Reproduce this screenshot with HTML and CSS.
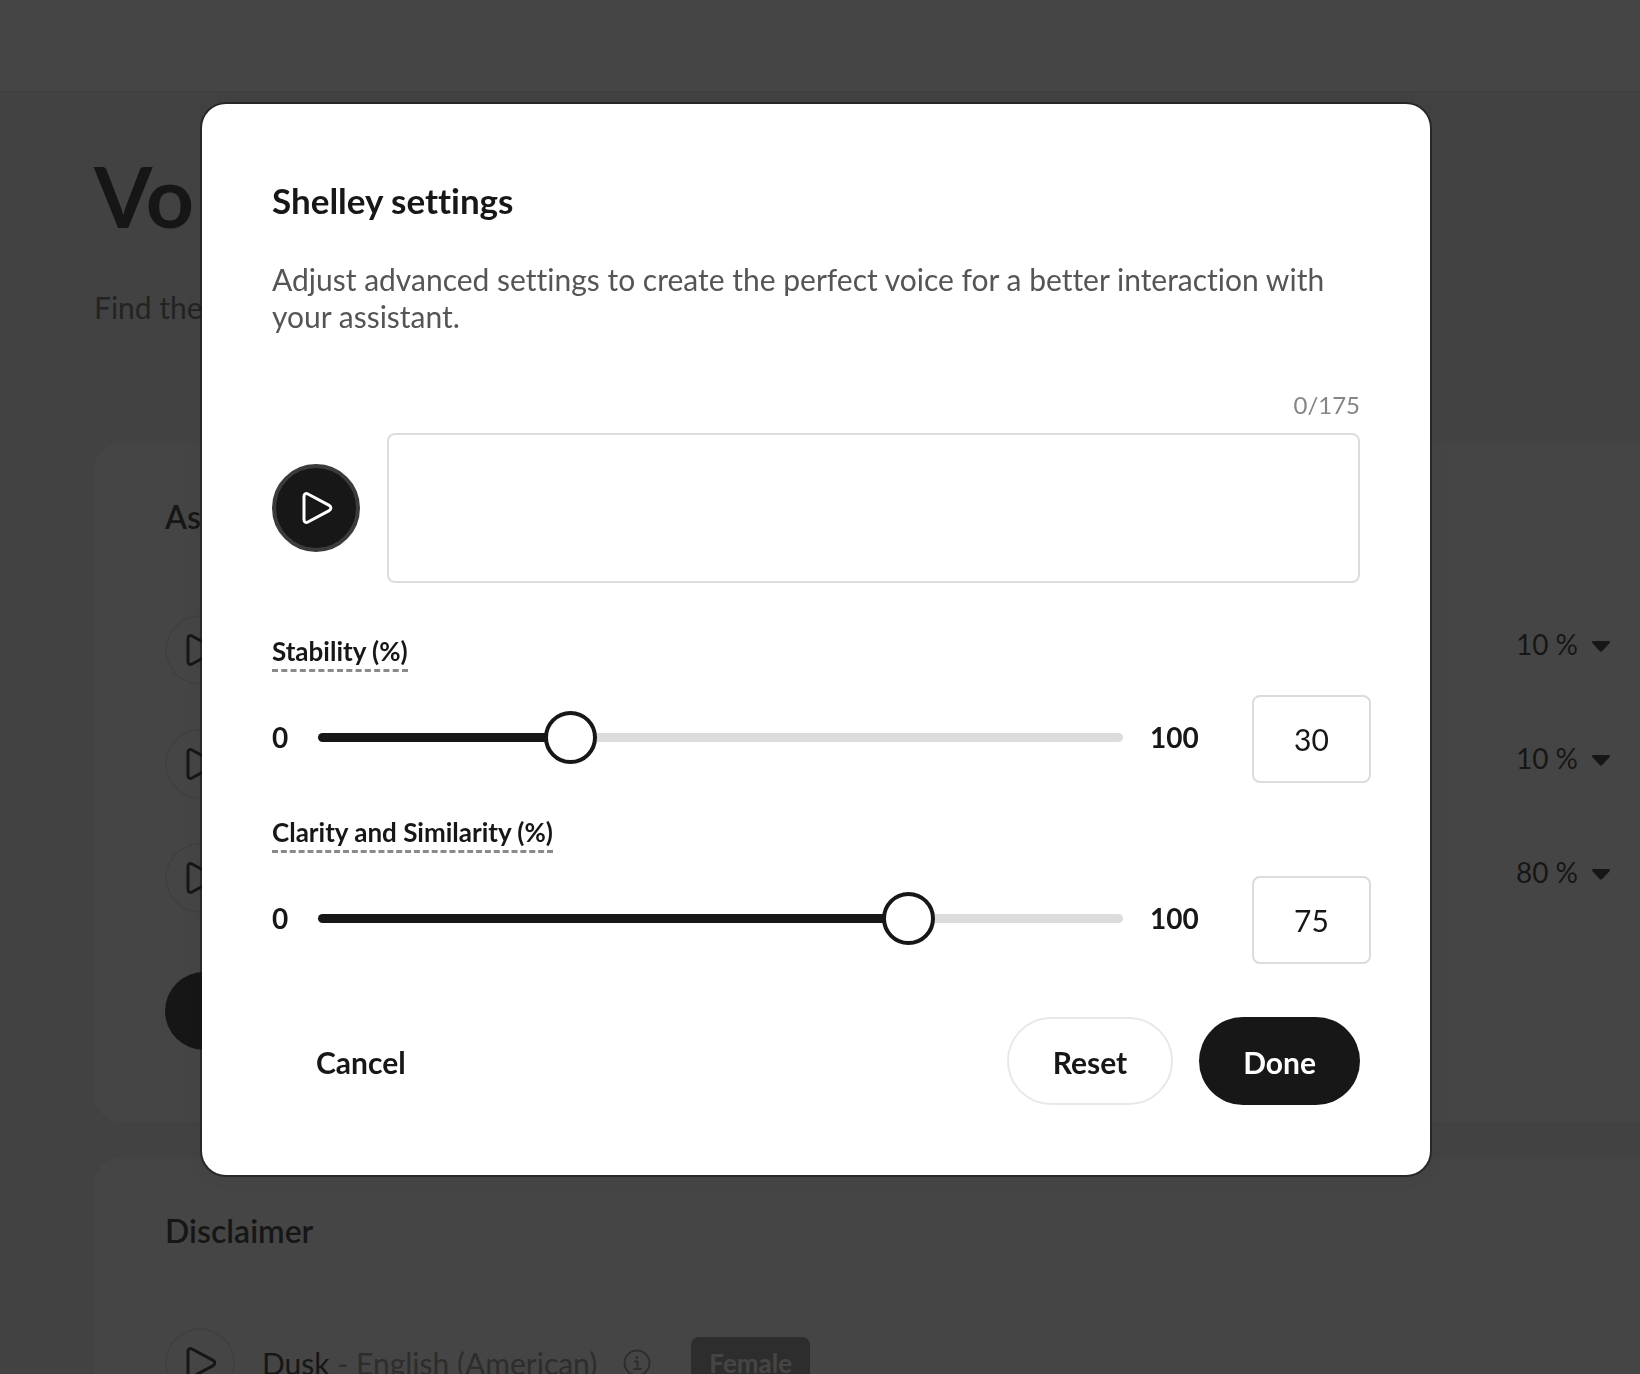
FILE: index.html
```html
<!DOCTYPE html>
<html lang="en">
<head>
<meta charset="utf-8">
<meta name="viewport" content="width=device-width, initial-scale=1">
<title>Shelley settings</title>
<link rel="stylesheet" href="styles.css">
</head>
<body>
<svg class="sprite" aria-hidden="true">
  <symbol id="play" viewBox="0 0 32 34"><path d="M3 5.2v23.6c0 2.3 2 3.2 3.9 2.2l21.3-11.4c2.2-1.2 2.2-4 0-5.2L6.900 3C5 2 3 2.900 3 5.200z" fill="none" stroke="currentColor" stroke-width="3" stroke-linejoin="round"/></symbol>
  <symbol id="caret" viewBox="0 0 18 11"><path d="M1.500 0h15c1.300 0 1.900 1.300 1 2.200l-7.200 7.700c-.8.900-1.900.9-2.700 0L.5 2.200C-.4 1.300.2 0 1.500 0z" fill="currentColor"/></symbol>
</svg>

<div class="page">
  <header class="topbar"></header>
  <main class="content">
    <h1 class="page-title">Vo</h1>
    <p class="page-lead">Find the</p>

    <section class="card">
      <h2 class="card-title">As</h2>
      <ul class="voices">
        <li class="voice">
          <button class="round" aria-label="Play"><svg class="round-icon"><use href="#play"/></svg></button>
          <button class="share">10 % <svg class="caret"><use href="#caret"/></svg></button>
        </li>
        <li class="voice">
          <button class="round" aria-label="Play"><svg class="round-icon"><use href="#play"/></svg></button>
          <button class="share">10 % <svg class="caret"><use href="#caret"/></svg></button>
        </li>
        <li class="voice">
          <button class="round" aria-label="Play"><svg class="round-icon"><use href="#play"/></svg></button>
          <button class="share">80 % <svg class="caret"><use href="#caret"/></svg></button>
        </li>
      </ul>
      <button class="add" aria-label="Add voice"></button>
    </section>

    <section class="card">
      <h2 class="card-title">Disclaimer</h2>
      <div class="voice voice-named">
        <button class="round" aria-label="Play Dusk"><svg class="round-icon"><use href="#play"/></svg></button>
        <p class="voice-name">Dusk <span class="voice-lang">- English (American)</span></p>
        <svg class="info" viewBox="0 0 28 28" fill="none" stroke="currentColor" stroke-width="2"><circle cx="14" cy="14" r="12.500"/><path d="M11 12.500h3.500V20M10.500 20h8"/><circle cx="14" cy="8.500" r="1.500" fill="currentColor" stroke="none"/></svg>
        <span class="badge">Female</span>
      </div>
    </section>
  </main>
</div>

<div class="backdrop">
  <form class="modal" role="dialog" aria-modal="true" aria-labelledby="dialog-title">
    <h2 class="modal-title" id="dialog-title">Shelley settings</h2>
    <p class="modal-text">Adjust advanced settings to create the perfect voice for a better interaction with your assistant.</p>

    <div class="counter">0/175</div>
    <div class="sample">
      <button type="button" class="preview" aria-label="Play sample"><svg class="preview-icon"><use href="#play"/></svg></button>
      <textarea class="sample-text" maxlength="175" aria-label="Sample text"></textarea>
    </div>

    <div class="fields">
      <div class="field">
        <label class="field-label" for="stability">Stability (%)</label>
        <div class="field-row">
          <span class="limit">0</span>
          <input class="slider" id="stability" type="range" min="0" max="100" value="30" style="--fill: 30%">
          <span class="limit limit-max">100</span>
          <input class="amount" type="text" inputmode="numeric" value="30" aria-label="Stability value">
        </div>
      </div>
      <div class="field">
        <label class="field-label" for="clarity">Clarity and Similarity (%)</label>
        <div class="field-row">
          <span class="limit">0</span>
          <input class="slider" id="clarity" type="range" min="0" max="100" value="75" style="--fill: 75%">
          <span class="limit limit-max">100</span>
          <input class="amount" type="text" inputmode="numeric" value="75" aria-label="Clarity and Similarity value">
        </div>
      </div>
    </div>

    <div class="actions">
      <button type="button" class="btn btn-plain">Cancel</button>
      <button type="button" class="btn btn-outline">Reset</button>
      <button type="button" class="btn btn-solid">Done</button>
    </div>
  </form>
</div>
</body>
</html>
```
FILE: styles.css
```css
:root {
  --ink: #171717;
  --muted: #555557;
  --line: #dcdcdc;
}

* { box-sizing: border-box; }

body {
  margin: 0;
  height: 100vh;
  overflow: hidden;
  background: #f1f1f1;
  color: var(--ink);
  font-family: Lato, "Open Sans", sans-serif;
  font-size: 30px;
  line-height: 36px;
  font-variant-ligatures: none;
}

h1, h2, p, ul { margin: 0; padding: 0; }

button, input, textarea {
  margin: 0;
  padding: 0;
  border: 0;
  background: none;
  color: inherit;
  font: inherit;
}

.sprite { position: absolute; width: 0; height: 0; }

/* Page behind the dialog */
.page { height: 100vh; overflow: hidden; }

.topbar {
  height: 93px;
  background: #fff;
  border-bottom: 2px solid #e6e6e6;
}

.content { padding: 48px 0 0 94px; }

.page-title {
  font-size: 84px;
  line-height: 110px;
  font-weight: 700;
}

.page-lead { margin-top: 38px; color: var(--muted); }

.card {
  margin-top: 35px;
  padding: 54px 30px 72px 71px;
  border-radius: 28px 0 0 28px;
  background: #fff;
}

.page-lead + .card { margin-top: 118px; }

.card-title {
  font-size: 32px;
  line-height: 40px;
  font-weight: 600;
}

.voices {
  display: flex;
  flex-direction: column;
  gap: 44px;
  margin-top: 78px;
  list-style: none;
}

.voice {
  display: flex;
  align-items: center;
  justify-content: space-between;
}

.voice-named {
  justify-content: flex-start;
  margin-top: 77px;
}

.round {
  display: flex;
  align-items: center;
  justify-content: center;
  width: 70px;
  height: 70px;
  padding-left: 2px;
  border: 2px solid #e6e6e6;
  border-radius: 50%;
}

.round-icon { width: 32px; height: 34px; }

.share {
  display: flex;
  align-items: center;
  gap: 14px;
  padding-bottom: 12px;
  font-size: 28px;
}

.caret { width: 18px; height: 11px; margin-top: 4px; }

.add {
  display: block;
  width: 200px;
  height: 78px;
  margin-top: 59px;
  border-radius: 40px;
  background: var(--ink);
}

.voice-name { margin-left: 27px; }
.voice-lang { color: #858588; }
.info { width: 28px; height: 28px; margin-left: 26px; color: #858588; }

.badge {
  margin-left: 40px;
  padding: 8px 18px;
  border-radius: 8px;
  background: #858588;
  color: #fff;
  font-size: 26px;
  font-weight: 700;
}

/* Dialog */
.backdrop {
  position: fixed;
  inset: 0;
  display: flex;
  align-items: flex-start;
  justify-content: center;
  padding: 104px 8px 0 0;
  background: rgba(23, 23, 23, .8);
}

.modal {
  width: 90%;
  max-width: 1228px;
  padding: 76px 70px 70px;
  border-radius: 24px;
  background: #fff;
  box-shadow: 0 0 0 2px rgba(23, 23, 23, .6), 0 2px 16px rgba(0, 0, 0, .08);
}

.modal-title {
  font-size: 35px;
  line-height: 40px;
  font-weight: 700;
}

.modal-text {
  margin-top: 41px;
  color: var(--muted);
  line-height: 37px;
}

.counter {
  margin-top: 54px;
  color: #858588;
  font-size: 24px;
  line-height: 32px;
  text-align: right;
}

.sample {
  display: flex;
  align-items: center;
  gap: 27px;
  margin-top: 12px;
}

.preview {
  display: flex;
  flex: none;
  align-items: center;
  justify-content: center;
  width: 88px;
  height: 88px;
  padding-left: 2px;
  border: 4px solid #3b3b3d;
  border-radius: 50%;
  background: var(--ink);
  color: #fff;
}

.preview-icon { width: 32px; height: 34px; }

.sample-text {
  flex: 1;
  height: 150px;
  padding: 20px;
  border: 2px solid var(--line);
  border-radius: 8px;
  resize: none;
}

.fields {
  display: flex;
  flex-direction: column;
  gap: 33px;
  margin-top: 52px;
}

.field-label {
  display: table;
  padding-bottom: 2px;
  border-bottom: 3px dashed #8a8a8c;
  font-size: 26px;
  line-height: 32px;
  font-weight: 700;
}

.field-row {
  display: grid;
  grid-template-columns: 46px 1fr 129px 119px;
  align-items: center;
  margin: 23px -11px 0 0;
}

.limit { padding-bottom: 4px; font-size: 28px; font-weight: 700; }
.limit-max { padding-left: 27px; }

.slider {
  width: 100%;
  height: 53px;
  margin-bottom: 3px;
  appearance: none;
}

.slider::-webkit-slider-runnable-track {
  height: 9px;
  border-radius: 5px;
  background: linear-gradient(to right, var(--ink) var(--fill), var(--line) var(--fill));
}

.slider::-webkit-slider-thumb {
  width: 53px;
  height: 53px;
  margin-top: -22px;
  appearance: none;
  border: 4px solid var(--ink);
  border-radius: 50%;
  background: #fff;
}

.amount {
  width: 100%;
  height: 88px;
  border: 2px solid var(--line);
  border-radius: 8px;
  text-align: center;
}

.actions {
  display: flex;
  gap: 26px;
  margin-top: 53px;
}

.btn {
  height: 88px;
  padding: 2px 44px 0;
  border-radius: 44px;
  font-weight: 700;
}

.btn-plain { margin-right: auto; }
.btn-outline { border: 2px solid #e8e8e8; }
.btn-solid { background: var(--ink); color: #fff; }
```
